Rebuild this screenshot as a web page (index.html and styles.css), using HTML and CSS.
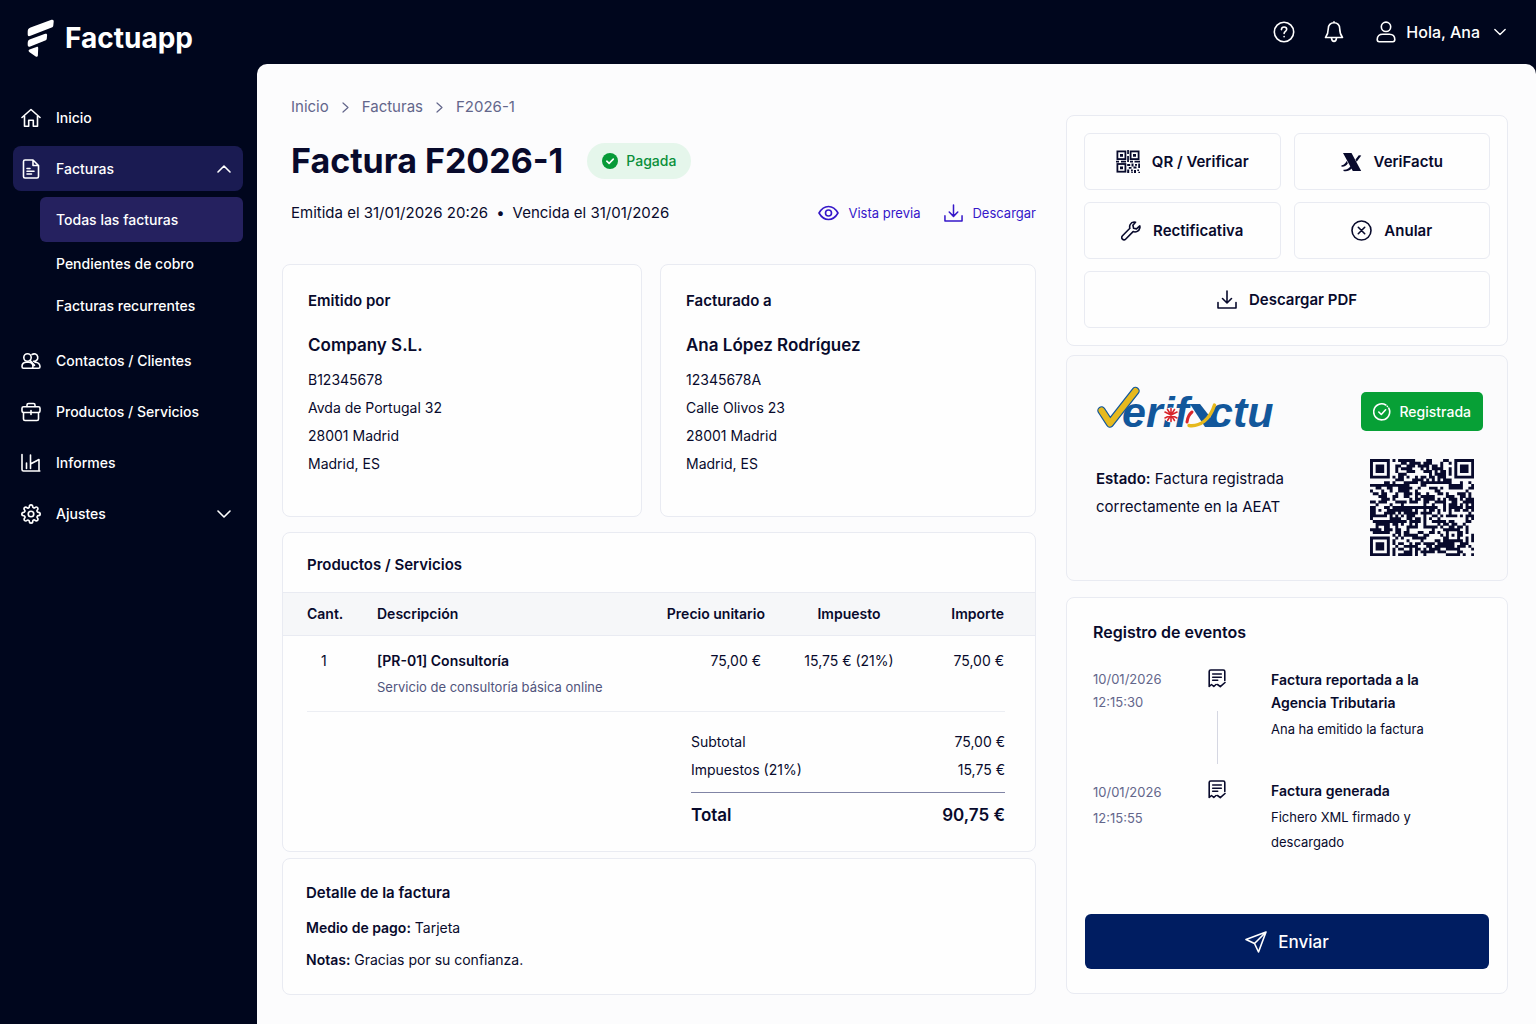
FILE: index.html
```html
<!DOCTYPE html>
<html lang="es">
<head>
<meta charset="utf-8">
<meta name="viewport" content="width=device-width, initial-scale=1">
<title>Factura F2026-1 · Factuapp</title>
<link rel="stylesheet" href="styles.css">
</head>
<body>
<svg class="sprite" aria-hidden="true">
  <symbol id="i-download" viewBox="0 0 20 20"><path d="M10 1v11.500M5.500 8.500l4.500 4.500 4.500-4.500M1 12.500v5.500h18v-5.500"/></symbol>
  <symbol id="i-down" viewBox="0 0 14 8"><path d="M1 1l6 6 6-6"/></symbol>
  <symbol id="i-up" viewBox="0 0 14 8"><path d="M1 7l6-6 6 6"/></symbol>
  <symbol id="i-right" viewBox="0 0 7 11"><path d="M1 1l5 4.500-5 4.500"/></symbol>
  <symbol id="i-receipt" viewBox="0 0 18 19"><path d="M1.200 17.500V2.500C1.200 1.500 1.700 1 2.700 1H15.300c1 0 1.500.5 1.500 1.500V11.500M1.200 17.500l2.300-2 2.300 2 2.200-2M4.700 5h8.600M4.700 8.200h8.600M4.700 11.300h5M9.500 15.500l2.800 2.200 4.700-4.200"/></symbol>
</svg>
<div class="app">
  <header class="topbar">
    <a class="brand" href="#">
      <svg width="27" height="38" viewBox="0 0 27 38"><path d="M3.500 8.500L24.500.800C26 .300 26.800 1 26.700 2.500L26.300 6.500c-.1 1-.6 1.600-1.600 2L3.500 16.800C1.500 17.600.700 17 .700 15.200V12.800C.700 10.500 1.500 9.300 3.500 8.500z"/><path d="M3.200 20.300L18.200 14.800c1.300-.4 2 .1 1.900 1.500l-.3 3.200c-.1 1-.6 1.600-1.600 2L3.300 27.500C1.500 28.200.700 27.500.700 25.800V24c0-2 .8-3 2.500-3.700z"/><path d="M3.200 30.200l6.300-2.200c1.200-.4 1.800.1 1.700 1.300l-.3 7c-.1 1.400-1 1.900-2.200 1.100L2.600 33.200c-1.500-1-1.300-2.400.6-3z"/></svg>
      <span>Factuapp</span>
    </a>
    <div class="tools">
      <button class="icon-btn" aria-label="Ayuda"><svg width="22" height="22" viewBox="0 0 22 22"><circle cx="11" cy="11" r="9.700"/><path d="M8.400 8.600C8.500 6.900 9.600 6 11.100 6c1.500 0 2.600.9 2.600 2.300 0 2-2.600 2-2.600 4.200"/><path d="M11.100 15.500v.3"/></svg></button>
      <button class="icon-btn" aria-label="Notificaciones"><svg width="20" height="22" viewBox="0 0 20 22"><path d="M10 1.800c-3.600 0-5.700 2.400-5.700 5.800 0 4-.6 6-2.800 8.900h17c-2.200-2.900-2.800-4.900-2.800-8.900C15.700 4.200 13.600 1.800 10 1.800zM10 .8v1M7.500 17.200c.2 2 1.100 3.200 2.500 3.200s2.300-1.200 2.500-3.200"/></svg></button>
      <button class="user"><svg width="20" height="22" viewBox="0 0 20 22"><circle cx="10" cy="5.800" r="4.700"/><path d="M1.200 18.500c0-3.700 2.200-5.200 5.500-5.200h6.600c3.300 0 5.500 1.500 5.500 5.200 0 1.600-.6 2.200-2 2.200H3.200c-1.400 0-2-.6-2-2.200z"/></svg><span>Hola, Ana</span><svg width="12" height="8"><use href="#i-down"/></svg></button>
    </div>
  </header>

  <nav class="sidebar" aria-label="Principal">
    <ul class="menu">
      <li><a class="item" href="#"><svg width="20" height="20" viewBox="0 0 20 20"><path d="M1 9.500L10 1.500l9 8M3.500 8v10.200h4.200v-6h4.600v6h4.200V8"/></svg>Inicio</a></li>
      <li><a class="item open" href="#"><svg width="20" height="20" viewBox="0 0 20 20"><path d="M4 1h8l5.500 5.500v11c0 1-.5 1.500-1.500 1.500H4c-1 0-1.500-.5-1.500-1.500v-15C2.500 1.500 3 1 4 1zM12 1v5.500h5.500M6 9.500h3M6 12.200h7M6 15h4.500"/></svg>Facturas<svg class="caret" width="14" height="8"><use href="#i-up"/></svg></a>
        <ul class="submenu">
          <li><a class="active" href="#">Todas las facturas</a></li>
          <li><a href="#">Pendientes de cobro</a></li>
          <li><a href="#">Facturas recurrentes</a></li>
        </ul>
      </li>
      <li><a class="item" href="#"><svg width="20" height="20" viewBox="0 0 20 20"><circle cx="6.500" cy="6.500" r="3.700"/><path d="M11 3.500a3.700 3.700 0 1 1 1.500 6.700M1 15.500c0-3 1.700-4.300 4.500-4.300h2c2.800 0 4.500 1.300 4.500 4.300 0 1.200-.5 1.700-1.500 1.700h-8C1.500 17.200 1 16.700 1 15.500zM10.500 17.200h7c1 0 1.500-.5 1.500-1.500 0-3.500-2.500-4.300-5-4.500M9 9.300l4.500 5"/></svg>Contactos / Clientes</a></li>
      <li><a class="item" href="#"><svg width="20" height="20" viewBox="0 0 20 20"><rect x="1" y="4.700" width="18" height="5.800" rx="1.500"/><path d="M6 4.500V3c0-1 .5-1.500 1.500-1.500h5c1 0 1.500.5 1.500 1.500v1.500M2.500 10.500V17c0 1 .5 1.500 1.500 1.500h12c1 0 1.500-.5 1.500-1.500v-6.500M10 8.500v4"/></svg>Productos / Servicios</a></li>
      <li><a class="item" href="#"><svg width="20" height="20" viewBox="0 0 20 20"><path d="M1 1.500v15c0 1 .5 1.500 1.500 1.500h16.300M5.500 10v5.500M9.500 15.500V2M9.500 11L18 6.500V17"/></svg>Informes</a></li>
      <li><a class="item" href="#"><svg class="gear" width="20" height="20" viewBox="0 0 24 24"><circle cx="12" cy="12" r="3.300"/><path d="M19.400 15a1.650 1.650 0 0 0 .33 1.820l.06.06a2 2 0 0 1 0 2.830 2 2 0 0 1-2.830 0l-.06-.06a1.650 1.650 0 0 0-1.820-.33 1.650 1.650 0 0 0-1 1.510V21a2 2 0 0 1-2 2 2 2 0 0 1-2-2v-.09A1.650 1.650 0 0 0 9 19.400a1.650 1.650 0 0 0-1.820.33l-.06.06a2 2 0 0 1-2.830 0 2 2 0 0 1 0-2.830l.06-.06a1.650 1.650 0 0 0 .33-1.820 1.650 1.650 0 0 0-1.510-1H3a2 2 0 0 1-2-2 2 2 0 0 1 2-2h.09A1.650 1.650 0 0 0 4.600 9a1.650 1.650 0 0 0-.33-1.820l-.06-.06a2 2 0 0 1 0-2.830 2 2 0 0 1 2.830 0l.06.06a1.650 1.650 0 0 0 1.820.33H9a1.650 1.650 0 0 0 1-1.510V3a2 2 0 0 1 2-2 2 2 0 0 1 2 2v.09a1.650 1.650 0 0 0 1 1.510 1.650 1.650 0 0 0 1.820-.33l.06-.06a2 2 0 0 1 2.830 0 2 2 0 0 1 0 2.830l-.06.06a1.650 1.650 0 0 0-.33 1.820V9a1.650 1.650 0 0 0 1.510 1H21a2 2 0 0 1 2 2 2 2 0 0 1-2 2h-.09a1.650 1.650 0 0 0-1.510 1z"/></svg>Ajustes<svg class="caret" width="14" height="8"><use href="#i-down"/></svg></a></li>
    </ul>
  </nav>

  <main class="page">
    <div class="invoice">
      <nav class="crumbs" aria-label="Ruta"><a href="#">Inicio</a><svg width="7" height="11"><use href="#i-right"/></svg><a href="#">Facturas</a><svg width="7" height="11"><use href="#i-right"/></svg><span>F2026-1</span></nav>
      <div class="heading">
        <h1>Factura F2026-1</h1>
        <span class="paid"><svg width="16" height="16" viewBox="0 0 16 16"><circle cx="8" cy="8" r="8" fill="#079a38"/><path d="M4.800 8.200l2.300 2.200 4.200-4.300" fill="none" stroke="#fff" stroke-width="1.600"/></svg>Pagada</span>
      </div>
      <div class="meta">
        <p>Emitida el 31/01/2026 20:26<span class="dot">•</span>Vencida el 31/01/2026</p>
        <div class="links">
          <a href="#"><svg width="21" height="16" viewBox="0 0 21 16"><path d="M1 8c2.300-4 5.500-6.500 9.500-6.500S17.700 4 20 8c-2.300 4-5.500 6.500-9.500 6.500S3.300 12 1 8z"/><circle cx="10.500" cy="8" r="3"/></svg>Vista previa</a>
          <a href="#"><svg width="19" height="19"><use href="#i-download"/></svg>Descargar</a>
        </div>
      </div>

      <div class="parties">
        <section class="card party">
          <h2>Emitido por</h2>
          <h3>Company S.L.</h3>
          <p>B12345678<br>Avda de Portugal 32<br>28001 Madrid<br>Madrid, ES</p>
        </section>
        <section class="card party">
          <h2>Facturado a</h2>
          <h3>Ana López Rodríguez</h3>
          <p>12345678A<br>Calle Olivos 23<br>28001 Madrid<br>Madrid, ES</p>
        </section>
      </div>

      <section class="card lines">
        <h2>Productos / Servicios</h2>
        <table>
          <thead><tr><th class="qty">Cant.</th><th class="desc">Descripción</th><th class="price">Precio unitario</th><th class="tax">Impuesto</th><th class="amount">Importe</th></tr></thead>
          <tbody><tr><td class="qty">1</td><td class="desc"><strong>[PR-01] Consultoría</strong><small>Servicio de consultoría básica online</small></td><td class="price">75,00 €</td><td class="tax">15,75 € (21%)</td><td class="amount">75,00 €</td></tr></tbody>
        </table>
        <div class="summary">
          <dl>
            <div><dt>Subtotal</dt><dd>75,00 €</dd></div>
            <div><dt>Impuestos (21%)</dt><dd>15,75 €</dd></div>
            <div class="total"><dt>Total</dt><dd>90,75 €</dd></div>
          </dl>
        </div>
      </section>

      <section class="card detail">
        <h2>Detalle de la factura</h2>
        <p><strong>Medio de pago:</strong> Tarjeta</p>
        <p><strong>Notas:</strong> Gracias por su confianza.</p>
      </section>
    </div>

    <aside class="side">
      <div class="card actions">
        <button><svg class="qr-icon" width="24" height="23" viewBox="0 0 24 23"><g fill="none" stroke="#080a2c" stroke-width="1.800"><rect x="1.400" y="1.400" width="8" height="7.700"/><rect x="14.600" y="1.400" width="8" height="7.700"/><rect x="1.400" y="14" width="8" height="7.700"/></g><path fill="#080a2c" d="M4 4h3v2.700H4zM17 4h3v2.700h-3zM4 16.500h3v2.700H4zM11.200 0h1.700v4h-1.700zM11.200 6h1.700v6h-1.700zM0 10.800h3v1.600H0zM5 10.800h5v1.600H5zM14 10.800h3v1.600h-3zM18.500 10.800H24v1.600h-5.500zM11.200 14h3v2h-3zM15.500 13.500h2v3h-2zM19 14h2v1.800h-2zM22.200 13.500H24V18h-1.800zM12.800 17h2.700v1.700h-2.700zM17.500 16.500h3v2h-3zM11.200 19.500h2V23h-2zM15 19.500h1.800v2H15zM18 20h2v3h-2zM21.300 19.500h1.700v1.500h-1.700zM22.300 21.700H24V23h-1.700zM15.300 22h1.500v1h-1.500z"/></svg>QR / Verificar</button>
        <button><svg class="solid" width="21" height="20" viewBox="0 0 21 20"><path d="M2 1h8.500l9.700 18h-8.400zM14.500 7.500l3.300-4.200 2.500.3-4.600 6.200zM.5 13.300c2.300-.2 3.800-1.700 5.200-4.300l1.200 2.200C5.500 13.500 3.700 14.900.5 14.700zM2.500 17.800c3 .3 5.300-1 6.900-3.500l1.100 2.100c-1.900 2.400-4.500 3.200-8 2.600z"/></svg>VeriFactu</button>
        <button><svg width="20" height="20" viewBox="0 0 20 20"><path d="M14.500 1.200c-2-.4-4.300.4-5.300 2.300-.7 1.300-.7 2.600-.3 3.800L1.500 14.700c-1 1-1 2.500-.1 3.400.9.900 2.400.9 3.400-.1l7.300-7.400c2.900 1 6-.4 6.700-3.600.2-.7.200-1.400 0-2.100l-3.300 3-2.900-.7-.7-2.900z"/></svg>Rectificativa</button>
        <button><svg width="21" height="21" viewBox="0 0 21 21"><circle cx="10.500" cy="10.500" r="9.500"/><path d="M7.300 7.300l6.400 6.400M13.700 7.300l-6.400 6.400"/></svg>Anular</button>
        <button class="wide"><svg width="20" height="20"><use href="#i-download"/></svg>Descargar PDF</button>
      </div>

      <section class="card verifactu">
        <div>
          <svg class="logo" width="182" height="56" viewBox="0 0 182 56" role="img" aria-label="Verifactu">
            <g font-family="Liberation Sans, Arial, sans-serif" font-weight="700" font-style="italic" font-size="43" fill="#12579b">
              <text x="26" y="41">erif</text>
              <text x="113" y="41">ctu</text>
            </g>
            <path d="M94 18h10l18 23h-13z" fill="#12579b"/>
            <path d="M93 39.500c11 1.500 21-6 25.500-20.500" fill="none" stroke="#e6b91e" stroke-width="3.400"/>
            <path d="M91 36c.5-4 2.500-8 5-10" fill="none" stroke="#d8262c" stroke-width="3"/>
            <circle cx="75" cy="29" r="7.500" fill="#fff"/>
            <path d="M75 22.500v13M69 26l12 6M69 32l12-6M71.500 23.500l7 11M78.500 23.500l-7 11" stroke="#d8262c" stroke-width="1.600"/>
            <path d="M5.500 24.500l8.500 13L39.500 5" fill="none" stroke="#12579b" stroke-width="8.500" stroke-linecap="round" stroke-linejoin="round"/>
            <path d="M5.500 24.500l8.500 13L39.500 5" fill="none" stroke="#e6b91e" stroke-width="6" stroke-linecap="round" stroke-linejoin="round"/>
          </svg>
          <p><strong>Estado:</strong> Factura registrada<br>correctamente en la AEAT</p>
        </div>
        <div class="proof">
          <span class="registered"><svg width="18" height="18" viewBox="0 0 18 18"><path d="M15.800 5.200A8 8 0 1 1 12.800 2M5.800 9l2.500 2.500 4.300-4.700"/><path d="M14.300 3.300l.1.100"/></svg>Registrada</span>
          <svg class="qr" width="104" height="97" viewBox="0 0 37 35" preserveAspectRatio="none" role="img" aria-label="Código QR"><path id="qr-modules"/></svg>
        </div>
      </section>

      <section class="card events">
        <h2>Registro de eventos</h2>
        <ol>
          <li><time>10/01/2026<br>12:15:30</time><div class="mark"><svg width="18" height="19"><use href="#i-receipt"/></svg></div><div class="what"><strong>Factura reportada a la<br>Agencia Tributaria</strong><p>Ana ha emitido la factura</p></div></li>
          <li><time class="loose">10/01/2026<br>12:15:55</time><div class="mark"><svg width="18" height="19"><use href="#i-receipt"/></svg></div><div class="what"><strong>Factura generada</strong><p>Fichero XML firmado y<br>descargado</p></div></li>
        </ol>
        <button class="send"><svg width="22" height="22" viewBox="0 0 22 22"><path d="M21 1L1 8.500l8.500 4L13.500 21zM21 1L9.500 12.500"/></svg>Enviar</button>
      </section>
    </aside>
  </main>
</div>
<script src="qr.js"></script>
</body>
</html>
```
FILE: styles.css
```css
* { box-sizing: border-box; }

body {
  margin: 0;
  background: #00061d;
  color: #080a2c;
  font: 400 15px/24px Inter, "Liberation Sans", sans-serif;
}

h1, h2, h3, p, ul, ol, dl, dd { margin: 0; padding: 0; }
ul, ol { list-style: none; }
a { color: inherit; text-decoration: none; }
strong { font-weight: 600; }
button { font: inherit; color: inherit; background: none; border: 0; padding: 0; cursor: pointer; }
svg { flex: none; fill: none; stroke: currentColor; stroke-width: 1.600; stroke-linecap: round; stroke-linejoin: round; }
.sprite { position: absolute; width: 0; height: 0; }

.app {
  display: grid;
  grid-template: 64px 1fr / 257px minmax(0, 1fr);
  min-height: 100vh;
}

/* Top bar */
.topbar {
  grid-column: 1 / -1;
  display: flex;
  justify-content: space-between;
  color: #fff;
  padding: 0 30px 0 27px;
}
.brand { display: flex; align-items: center; gap: 11px; padding-top: 12px; font-size: 28px; line-height: 40px; font-weight: 700; }
.brand svg { fill: currentColor; stroke: none; }
.tools { display: flex; align-items: center; gap: 29px; }
.icon-btn, .user { display: flex; align-items: center; }
.user { gap: 10px; font-size: 16px; font-weight: 500; margin-left: 3px; }
.user svg:last-child { margin-left: 4px; }

/* Sidebar */
.sidebar { color: #fff; font-size: 14px; font-weight: 500; padding: 31px 14px 24px 13px; }
.menu { display: flex; flex-direction: column; gap: 6px; }
.item { display: flex; align-items: center; gap: 15px; height: 45px; padding: 0 12px 0 8px; border-radius: 8px; }
.item .caret { margin-left: auto; }
.gear { stroke-width: 2; }
.open { background: #1a1b52; }
.submenu { padding: 6px 0 5px 27px; }
.submenu a { display: block; padding: 0 16px; line-height: 42px; border-radius: 6px; }
.submenu .active { background: #25215f; line-height: 45px; margin-bottom: 1px; }

/* Page */
.page {
  display: grid;
  grid-template-columns: minmax(0, 754fr) minmax(0, 442fr);
  gap: 30px;
  align-items: start;
  background: #fcfcfd;
  border-radius: 10px 10px 0 0;
  padding: 33px 28px 28px 25px;
}
.card { background: #fefefe; border: 1px solid #e9ebf2; border-radius: 8px; }
h2 { font-size: 15px; line-height: 24px; font-weight: 600; }

.crumbs { display: flex; align-items: center; gap: 13px; padding-left: 9px; line-height: 20px; color: #63668b; }
.crumbs svg { stroke-width: 1.200; }
.heading { display: flex; align-items: center; gap: 24px; margin-top: 22px; padding-left: 9px; }
h1 { font-size: 34px; line-height: 44px; font-weight: 700; }
.paid { display: flex; align-items: center; gap: 8px; height: 36px; padding: 0 15px; border-radius: 18px; background: #e5f6eb; color: #0a8f3a; font-weight: 500; font-size: 14px; }
.paid svg { stroke: none; }
.meta { display: flex; justify-content: space-between; align-items: center; margin-top: 18px; padding-left: 9px; }
.dot { margin: 0 8px; }
.links { display: flex; gap: 24px; color: #3517c9; font-size: 13px; }
.links a { display: flex; align-items: center; gap: 9px; }

.parties { display: grid; grid-template-columns: 360fr 376fr; gap: 18px; margin-top: 39px; }
.party { padding: 24px 25px 38px; }
.party h3 { font-size: 17px; line-height: 28px; font-weight: 600; margin: 18px 0 7px; }
.party p { font-size: 14px; line-height: 28px; }

.lines { margin-top: 15px; padding-bottom: 22px; }
.lines h2 { padding: 20px 24px 15px; }
table { width: 100%; border-collapse: collapse; font-size: 14px; }
th { background: #f6f7f9; border: solid #e9ebf2; border-width: 1px 0; font-weight: 600; height: 43px; padding: 0; }
td { padding: 13px 0 12px; vertical-align: top; }
.qty { width: 94px; text-align: left; padding-left: 24px; }
td.qty { padding-left: 38px; }
.desc { text-align: left; }
.desc strong, .desc small { display: block; }
.desc small { font-size: 13px; line-height: 24px; margin-top: 2px; color: #50547c; }
.price { width: 110px; text-align: right; }
td.price { padding-right: 4px; }
.tax { width: 168px; text-align: center; }
.amount { width: 102px; text-align: right; padding-right: 31px; }
.summary { margin: 0 30px 0 24px; padding-top: 16px; border-top: 1px solid #eceef3; display: flex; justify-content: flex-end; font-size: 14px; }
dl { width: 314px; }
dl div { display: flex; justify-content: space-between; line-height: 28px; }
.total { border-top: 1px solid #8084a5; margin-top: 8px; padding-top: 8px; font-size: 17px; font-weight: 600; }

.detail { margin-top: 6px; padding: 22px 23px; }
.detail p { margin-top: 8px; font-size: 14px; }
.detail h2 + p { margin-top: 11px; }

/* Right column */
.side { padding-top: 18px; }
.actions { display: grid; grid-template-columns: 1fr 1fr; gap: 12px 13px; padding: 17px; }
.actions button { display: flex; align-items: center; justify-content: center; gap: 12px; height: 57px; border: 1px solid #e9ebf2; border-radius: 6px; font-weight: 600; }
.actions .wide { grid-column: 1 / -1; }
.actions .solid { fill: currentColor; stroke: none; }
.qr-icon { stroke-linecap: butt; stroke-linejoin: miter; stroke: none; }

.verifactu { display: flex; justify-content: space-between; margin-top: 9px; padding: 30px 24px 24px 29px; background: #fbfbfc; }
.logo { display: block; stroke: none; }
.verifactu p { line-height: 28px; margin-top: 23px; }
.proof { display: flex; flex-direction: column; align-items: center; padding-top: 6px; }
.registered { display: flex; align-items: center; gap: 8px; height: 39px; padding: 0 12px; border-radius: 5px; background: #07a036; color: #fff; font-size: 14px; font-weight: 500; }
.qr { stroke: none; fill: #080a2c; margin-top: 28px; }

.events { margin-top: 16px; padding: 22px 18px 24px; }
.events h2 { font-size: 16px; padding-left: 8px; }
.events ol { padding-left: 8px; margin-top: 24px; }
.events li { display: grid; grid-template-columns: 115px 63px 1fr; font-size: 14px; line-height: 23px; min-height: 111px; }
time { color: #63668b; font-size: 13px; }
.events .loose { line-height: 26px; }
.mark { display: flex; flex-direction: column; align-items: flex-start; padding-top: 1px; }
.mark::after { content: ""; width: 1px; height: 53px; margin: 23px 0 0 9px; background: #d5d7e2; }
li:last-child .mark::after { display: none; }
.what strong { display: block; }
.what p { font-size: 13px; line-height: 25px; margin-top: 3px; }
.send { display: flex; align-items: center; justify-content: center; gap: 11px; width: 100%; height: 55px; margin-top: 24px; border-radius: 6px; background: #001d61; color: #fff; font-size: 17px; font-weight: 500; }
```
FILE: qr.js
```js
// Fills the verification code: three finder squares, one alignment square and data modules.
const cols = 37, rows = 35;
let seed = 20261;
const next = () => (seed = (seed * 1103515245 + 12345) % 2147483648) / 2147483648;
const ring = (x, y, cx, cy, reach) => {
  const d = Math.max(Math.abs(x - cx), Math.abs(y - cy));
  return d > reach ? null : d;
};
let d = "";
for (let y = 0; y < rows; y++) {
  for (let x = 0; x < cols; x++) {
    let on = next() < 0.52;
    for (const [cx, cy] of [[3, 3], [cols - 4, 3], [3, rows - 4]]) {
      const r = ring(x, y, cx, cy, 4);
      if (r !== null) on = r < 2 || r === 3;
    }
    const a = ring(x, y, cols - 8, rows - 8, 2);
    if (a !== null) on = a !== 1;
    if (on) d += `M${x} ${y}h1.050v1.050h-1.050z`;
  }
}
document.getElementById("qr-modules").setAttribute("d", d);
```
